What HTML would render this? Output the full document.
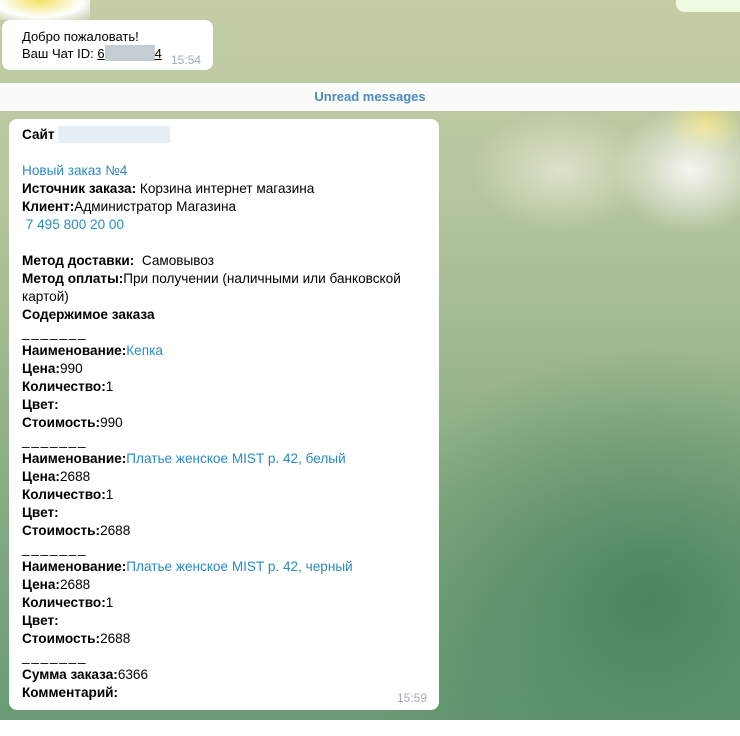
<!DOCTYPE html>
<html><head><meta charset="utf-8"><style>
body{margin:0;width:740px;height:736px;overflow:hidden;position:relative;font-family:"Liberation Sans","DejaVu Sans",sans-serif;font-size:13.6px;color:#000;
background:
radial-gradient(ellipse 110px 90px at 690px 170px,rgba(255,255,255,.85),rgba(255,255,255,0) 70%),
radial-gradient(ellipse 40px 30px at 705px 125px,rgba(240,225,120,.9),rgba(240,225,120,0)),
radial-gradient(ellipse 90px 60px at 560px 170px,rgba(235,238,220,.7),rgba(235,238,220,0)),
radial-gradient(ellipse 300px 250px at 650px 600px,rgba(70,130,90,.9),rgba(70,130,90,0)),
linear-gradient(180deg,#c4cda6 0%,#b3c49c 30%,#8fb088 60%,#669a72 100%);}
.b{position:absolute;background:#fff;border-radius:8px;}
.t{color:#a0acb6;font-size:12px;position:absolute}
.l{color:#2a8ac6}
.c{position:absolute;left:22px;top:126px;line-height:18px;width:410px}
.d{letter-spacing:-1px}
b{font-weight:bold}
</style></head><body>
<div style="position:absolute;left:0;top:0;width:90px;height:20px;background:radial-gradient(ellipse at 40px 0,#f0e060,#fff 60%,rgba(255,255,255,0) 100%)"></div>
<div style="position:absolute;left:676px;top:0;width:70px;height:12px;background:#eefadf;border-radius:0 0 0 8px"></div>
<div class="b" style="left:2px;top:20px;width:211px;height:50px">
<div style="position:absolute;left:20px;top:8px;line-height:17px;font-size:13px">Добро пожаловать!<br>Ваш Чат ID: <span style="text-decoration:underline">6<span style="display:inline-block;width:50px;height:16px;background:#c5ccd3;vertical-align:-3px"></span>4</span></div>
<div class="t" style="left:169px;top:33px">15:54</div></div>
<div style="position:absolute;left:0;top:83px;width:740px;height:28px;background:rgba(255,255,255,.93);color:#4a8bbd;font-weight:bold;font-size:13px;text-align:center;line-height:28px">Unread messages</div>
<div class="b" style="left:9px;top:119px;width:430px;height:591px">
<div class="t" style="left:388px;top:572px">15:59</div></div>
<div class="c">
<b>Сайт</b> <span style="display:inline-block;width:112px;height:17px;background:#e6eef6;vertical-align:-4px"></span><br><br>
<span class="l">Новый заказ №4</span><br>
<b>Источник заказа:</b> Корзина интернет магазина<br>
<b>Клиент:</b>Администратор Магазина<br>
<span class="l">&nbsp;7 495 800 20 00</span><br><br>
<b>Метод доставки:</b>&nbsp; Самовывоз<br>
<b>Метод оплаты:</b>При получении (наличными или банковской картой)<br>
<b>Содержимое заказа</b><br>
<span class="d">_ _ _ _ _ _ _</span><br>
<b>Наименование:</b><span class="l">Кепка</span><br>
<b>Цена:</b>990<br><b>Количество:</b>1<br><b>Цвет:</b><br><b>Стоимость:</b>990<br>
<span class="d">_ _ _ _ _ _ _</span><br>
<b>Наименование:</b><span class="l">Платье женское MIST р. 42, белый</span><br>
<b>Цена:</b>2688<br><b>Количество:</b>1<br><b>Цвет:</b><br><b>Стоимость:</b>2688<br>
<span class="d">_ _ _ _ _ _ _</span><br>
<b>Наименование:</b><span class="l">Платье женское MIST р. 42, черный</span><br>
<b>Цена:</b>2688<br><b>Количество:</b>1<br><b>Цвет:</b><br><b>Стоимость:</b>2688<br>
<span class="d">_ _ _ _ _ _ _</span><br>
<b>Сумма заказа:</b>6366<br>
<b>Комментарий:</b>
</div>
<div style="position:absolute;left:0;top:720px;width:740px;height:16px;background:#fff"></div>
</body></html>
